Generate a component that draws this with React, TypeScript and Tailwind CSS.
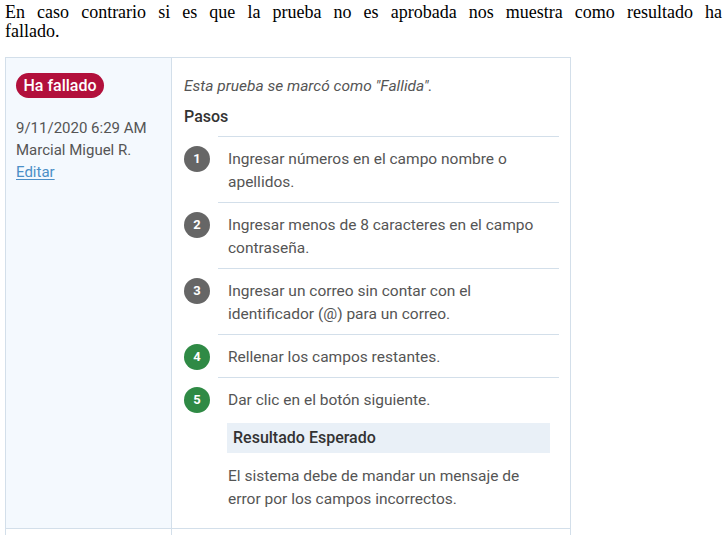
import React from "react";

const steps: { n: number; lines: string[]; green?: boolean }[] = [
  { n: 1, lines: ["Ingresar números en el campo nombre o", "apellidos."] },
  { n: 2, lines: ["Ingresar menos de 8 caracteres en el campo", "contraseña."] },
  { n: 3, lines: ["Ingresar un correo sin contar con el", "identificador (@) para un correo."] },
  { n: 4, lines: ["Rellenar los campos restantes."], green: true },
];

function Circle({ n, green }: { n: number; green?: boolean }) {
  return (
    <div
      className={
        "mt-[10px] flex h-[26px] w-[26px] shrink-0 items-center justify-center rounded-full text-[13px] font-bold text-white " +
        (green ? "bg-[#2f8a45]" : "bg-[#666666]")
      }
    >
      {n}
    </div>
  );
}

export default function App() {
  return (
    <div className="h-[542px] w-[727px] overflow-hidden bg-white">
      <p className="px-[5px] pt-[3px] font-['Liberation_Serif',serif] text-[18px] leading-[19px] text-black">
        <span className="block text-justify [text-align-last:justify]">
          En caso contrario si es que la prueba no es aprobada nos muestra como resultado ha
        </span>
        <span className="block">fallado.</span>
      </p>

      <div className="ml-[5px] mt-[16px] w-[566px] border-x border-t border-[#d3dfea] font-['Roboto',sans-serif]">
        <div className="flex border-b border-[#d3dfea]">
          <div className="w-[166px] shrink-0 border-r border-[#d3dfea] bg-[#f4f9fe] pl-[10px] pt-[15px]">
            <span className="inline-flex h-[25px] w-[88px] items-center justify-center rounded-full bg-[#b2103c] text-[16px] font-medium text-white">
              Ha fallado
            </span>
            <div className="mt-[19px] text-[15px] leading-[22px] text-[#555555]">
              <div>9/11/2020 6:29 AM</div>
              <div>Marcial Miguel R.</div>
              <a className="text-[#4b8fc7] underline underline-offset-2">Editar</a>
            </div>
          </div>

          <div className="flex-1 pl-[12px] pr-[11px] pt-[17px] pb-[17px] text-[15.5px]">
            <div className="leading-[22px] italic text-[#555555]">Esta prueba se marcó como "Fallida".</div>
            <div className="mt-[9px] text-[16px] font-medium leading-[22px] text-[#333333]">Pasos</div>

            <div className="mt-[8px]">
              {steps.map((s) => (
                <div key={s.n} className="flex items-start gap-[8px]">
                  <Circle n={s.n} green={s.green} />
                  <div className="flex-1 border-t border-[#d3dfea] pb-[8px] pl-[10px] pt-[11px] leading-[23px] text-[#555555]">
                    {s.lines.map((l, i) => (
                      <div key={i}>{l}</div>
                    ))}
                  </div>
                </div>
              ))}
              <div className="flex items-start gap-[8px]">
                <Circle n={5} green />
                <div className="flex-1 border-t border-[#d3dfea] pt-[11px]">
                  <div className="pl-[10px] leading-[23px] text-[#555555]">Dar clic en el botón siguiente.</div>
                  <div className="mr-[9px] ml-[9px] mt-[11px] flex h-[30px] items-center bg-[#e9f0f7] pl-[6px] text-[16px] font-medium text-[#333333]">
                    Resultado Esperado
                  </div>
                  <div className="mt-[12px] pl-[10px] leading-[23px] text-[#555555]">
                    <div>El sistema debe de mandar un mensaje de</div>
                    <div>error por los campos incorrectos.</div>
                  </div>
                </div>
              </div>
            </div>
          </div>
        </div>
        <div className="flex h-[6px]">
          <div className="w-[166px] border-r border-[#d3dfea]" />
          <div className="flex-1" />
        </div>
      </div>
    </div>
  );
}
